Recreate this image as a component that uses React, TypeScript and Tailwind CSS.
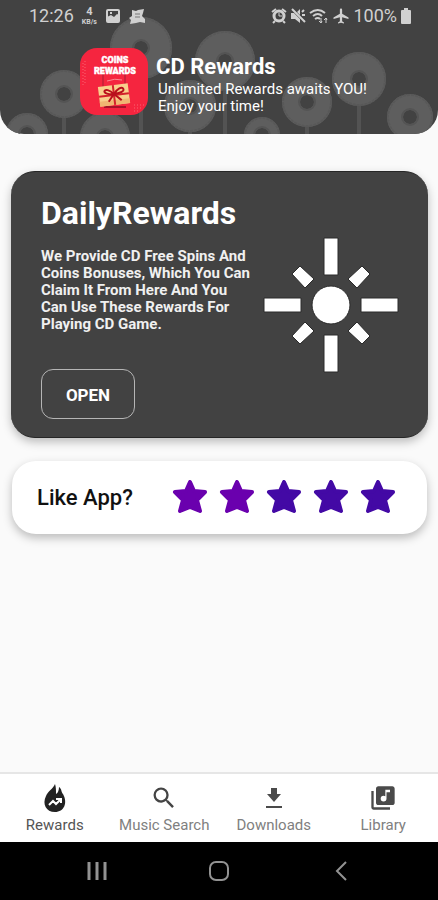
import React from 'react';
import { MdAirplanemodeActive, MdLibraryMusic, MdSearch } from 'react-icons/md';

const FLOWERS = [
  { x: 141, y: 48, r: 31 },
  { x: 225, y: 61, r: 30 },
  { x: 64, y: 94, r: 24 },
  { x: 27, y: 134, r: 21 },
  { x: 105, y: 137, r: 25 },
  { x: 190, y: 106, r: 26 },
  { x: 262, y: 135, r: 18 },
  { x: 307, y: 102, r: 25 },
  { x: 359, y: 79, r: 27 },
  { x: 410, y: 117, r: 23 },
];

const STARS = ['#6a00ae', '#6a00ae', '#4309a5', '#4309a5', '#4309a5'];

const FlowerPattern: React.FC = () => (
  <svg
    className="absolute inset-0 w-full h-full"
    viewBox="0 0 438 134"
    preserveAspectRatio="xMidYMin slice"
    fill="none"
    aria-hidden="true"
  >
    {FLOWERS.map(({ x, y, r }) => (
      <g key={`${x}-${y}`} stroke="#5e5e5e">
        <path d={`M${x} ${y + r}V134`} strokeWidth={4} stroke="#535353" />
        <circle cx={x} cy={y} r={(r + 7) / 2} strokeWidth={r - 7} />
        <circle cx={x} cy={y} r={r - 1} strokeWidth={2} strokeDasharray="3 1" stroke="#585858" />
        <circle cx={x} cy={y} r={8} strokeWidth={2} stroke="#545454" />
      </g>
    ))}
  </svg>
);

const AppLogo: React.FC = () => (
  <svg className="w-[68px] h-[67px] shrink-0" viewBox="0 0 68 67" role="img" aria-label="Coins Rewards">
    <rect width="68" height="67" rx="17" fill="#f5253f" />
    <g stroke="#fa6573" strokeWidth="1" strokeDasharray="1 2">
      <path d="M3 15v24M5 13v22" />
      <path d="M54 57h11M54 60h9M54 63h6" />
    </g>
    <path d="M23 26v14M45 26v14" stroke="#a51f33" strokeWidth="1" />
    <path d="M27 33q8-3 15-1" stroke="#fa8a92" strokeWidth="1" fill="none" />
    <path d="M24 59h22" stroke="#a31529" strokeWidth="2" />
    <g transform="rotate(-7 34 47)">
      <rect x="19" y="37" width="30" height="20" fill="#f9cf8c" />
      <path d="M19 52h30v5H19z" fill="#f0b672" />
      <path d="M34 37v20M19 47h30" stroke="#d3222b" strokeWidth="2" />
      <path
        d="M34 46c-4-5-8-6-9-4s4 4 9 4c4-5 9-7 10-4s-5 4-10 4l-6 7M34 46l7 7"
        stroke="#b8101c"
        strokeWidth="2"
        fill="none"
      />
    </g>
    <g fontFamily="Roboto, sans-serif" fontWeight="900" fill="#fff" stroke="#fff" strokeWidth="0.4" textAnchor="middle">
      <text x="35" y="15" fontSize="9">COINS</text>
      <text x="35" y="26" fontSize="9">REWARDS</text>
    </g>
  </svg>
);

const StatusBar: React.FC = () => (
  <div className="flex items-center justify-between h-8 pl-[29px] pr-[26px] text-[#d0d0d0]">
    <div className="flex items-center gap-2">
      <span className="text-lg leading-5">12:26</span>
      <span className="flex flex-col items-center font-bold">
        <span className="text-[11px] leading-[13px]">4</span>
        <span className="text-[7px] leading-[9px]">KB/s</span>
      </span>
      <svg className="w-4 h-4" viewBox="0 0 16 16" fill="none" stroke="currentColor" strokeWidth="2">
        <rect x="2" y="2" width="12" height="12" rx="1" />
        <path d="M2 9l4-2 3 2 3-3 2 1v7H2z" fill="currentColor" stroke="none" />
        <path d="M5 5h2" />
      </svg>
      <svg className="w-4 h-4" viewBox="0 0 16 16" fill="currentColor">
        <path d="M3 2l4 1 2-1 6-1-1 4-1 3 3 3v4l-5-1-4 1-6 1 1-4-2-2 3-2z" />
        <path d="M6 6h5M6 9h5" stroke="#777" strokeWidth="1" fill="none" />
      </svg>
    </div>
    <div className="flex items-center gap-[3px]">
      <svg className="w-4 h-4" viewBox="0 0 16 16" fill="none" stroke="currentColor">
        <circle cx="8" cy="8" r="5" strokeWidth="3" />
        <path d="M1 4l4-3M15 4l-4-3M4 13l-2 2M12 13l2 2" strokeWidth="2" />
        <path d="M8 5v3h3" strokeWidth="1" />
      </svg>
      <svg className="w-4 h-4" viewBox="0 0 16 16" fill="currentColor">
        <path d="M1 5h3l6 6v4l-5-4H1zM10 1v6L7 4z" />
        <path d="M2 1l13 13M12 4l2-2M12 7h3" stroke="currentColor" strokeWidth="2" />
      </svg>
      <svg className="w-5 h-4" viewBox="0 0 20 16" fill="none" stroke="currentColor">
        <path d="M1 5q8-6 15 0M4 8q5-4 9 0M6 11q3-2 5 0" strokeWidth="2" />
        <path d="M12 10v5M10 13l2 2 1-2M17 15v-5M15 12l2-2 1 2" strokeWidth="1" />
      </svg>
      <MdAirplanemodeActive className="w-[18px] h-[18px]" />
      <span className="text-lg leading-5">100%</span>
      <svg className="w-3 h-4" viewBox="0 0 12 16" fill="currentColor">
        <path d="M4 0h4v2h2q1 0 1 1v12q0 1-1 1H2q-1 0-1-1V3q0-1 1-1h2z" />
      </svg>
    </div>
  </div>
);

const Header: React.FC = () => (
  <header className="relative overflow-hidden rounded-b-3xl bg-[#424242]">
    <FlowerPattern />
    <div className="relative">
      <StatusBar />
      <div className="flex gap-2 px-20 pt-4 pb-[19px] text-white">
        <AppLogo />
        <div className="pt-[5px] whitespace-nowrap">
          <h1 className="text-[22px] leading-7 font-bold">CD Rewards</h1>
          <p className="pl-[2px] text-[15px] leading-[17px]">
            Unlimited Rewards awaits YOU!
            <br />
            Enjoy your time!
          </p>
        </div>
      </div>
    </div>
  </header>
);

const SunIcon: React.FC = () => (
  <svg className="w-[136px] h-[136px] shrink-0" viewBox="0 0 136 136" fill="#fff" stroke="#2a2a2a" aria-hidden="true">
    <circle cx="68" cy="68" r="19" />
    <path d="M61 1h14v37H61zM61 98h14v37H61zM1 61h37v14H1zM98 61h37v14H98z" />
    <path d="M37 29l14 13-9 9-13-14zM99 29l8 8-13 14-9-9zM29 99l13-14 9 9-14 13zM94 85l13 14-8 8-14-13z" />
  </svg>
);

const DailyCard: React.FC = () => (
  <section className="flex flex-col pt-[23px] pb-[18px] px-[30px] rounded-3xl bg-[#424242] text-white border-y border-[#262626] shadow-[0_4px_10px_rgba(0,0,0,0.25)]">
    <h2 className="text-[32px] leading-9 font-bold">DailyRewards</h2>
    <div className="flex justify-between -mr-px">
      <p className="pt-[17px] w-[214px] text-[15px] leading-[17px] font-bold text-[#f0f0f0]">
        We Provide CD Free Spins And Coins Bonuses, Which You Can Claim It From Here And You Can Use These Rewards For
        Playing CD Game.
      </p>
      <div className="pt-[6px]">
        <SunIcon />
      </div>
    </div>
    <button
      type="button"
      className="self-start -mt-1 pt-1 w-[94px] h-[50px] rounded-xl border border-[#b5b5b5] text-[17px] font-bold"
    >
      OPEN
    </button>
  </section>
);

const RateCard: React.FC = () => (
  <section className="flex items-center justify-between mx-px h-[73px] pl-[25px] pr-[31px] rounded-3xl bg-white shadow-[0_4px_10px_rgba(0,0,0,0.25)]">
    <h2 className="text-[22px] font-medium text-[#111]">Like App?</h2>
    <div className="flex gap-[11px]">
      {STARS.map((color, i) => (
        <button key={i} type="button" aria-label={`${i + 1} stars`}>
          <svg className="w-9 h-9" viewBox="0 0 36 36" fill={color} stroke={color} strokeWidth="4" strokeLinejoin="round">
            <path d="M18 2l4 9 11 1-8 8 3 11-10-4-10 4 3-11-8-8 11-1z" />
          </svg>
        </button>
      ))}
    </div>
  </section>
);

const FireIcon: React.FC = () => (
  <svg className="w-7 h-7" viewBox="0 0 28 28" fill="#222">
    <path d="M14 0c1 3 1 6 1 10 2-1 3-4 3-7 3 2 2 5 4 7 5 9 1 18-8 18S1 20 5 12c2-5 7-7 9-12z" />
    <path d="M8 21l4-4 3 3 5-5M15 15h5v4" fill="none" stroke="#fff" strokeWidth="2" />
  </svg>
);

const DownloadIcon: React.FC = () => (
  <svg className="w-7 h-7" viewBox="0 0 28 28" fill="#4a4a4a">
    <path d="M11 4h6v6h4l-7 8-7-8h4zM6 22h16v2H6z" />
  </svg>
);

const NAV = [
  { label: 'Rewards', icon: <FireIcon />, color: 'text-[#555]' },
  { label: 'Music Search', icon: <MdSearch className="w-7 h-7 text-[#444]" />, color: 'text-[#808080]' },
  { label: 'Downloads', icon: <DownloadIcon />, color: 'text-[#808080]' },
  { label: 'Library', icon: <MdLibraryMusic className="w-7 h-7 text-[#4a4a4a]" />, color: 'text-[#808080]' },
];

const TabBar: React.FC = () => (
  <nav className="grid grid-cols-4 h-[70px] border-t-2 border-[#e6e6e6] bg-white">
    {NAV.map(({ label, icon, color }) => (
      <a key={label} href="#" className={`flex flex-col items-center pt-[10px] text-[15px] leading-5 whitespace-nowrap ${color}`}>
        <span className="h-[31px]">{icon}</span>
        {label}
      </a>
    ))}
  </nav>
);

const SystemBar: React.FC = () => (
  <div className="grid grid-cols-[1fr_50px_1fr] h-[58px] items-center bg-black text-[#929292]">
    <button type="button" aria-label="Recent apps" className="justify-self-center">
      <svg className="w-5 h-5" viewBox="0 0 20 20" stroke="currentColor" strokeWidth="3">
        <path d="M2 1v18M10 1v18M18 1v18" />
      </svg>
    </button>
    <button type="button" aria-label="Home" className="justify-self-center">
      <svg className="w-5 h-5" viewBox="0 0 20 20" fill="none" stroke="currentColor" strokeWidth="2">
        <rect x="1" y="1" width="18" height="18" rx="6" />
      </svg>
    </button>
    <button type="button" aria-label="Back" className="justify-self-center">
      <svg className="w-5 h-5" viewBox="0 0 20 20" fill="none" stroke="currentColor" strokeWidth="2">
        <path d="M15 1L6 10l9 9" />
      </svg>
    </button>
  </div>
);

const App: React.FC = () => {
  return (
    <div className="flex flex-col min-h-screen bg-[#fafafa] font-[Roboto,sans-serif]">
      <Header />
      <main className="flex flex-col flex-1 gap-[23px] pt-[37px] pb-6 pl-[11px] pr-[10px]">
        <DailyCard />
        <RateCard />
      </main>
      <TabBar />
      <SystemBar />
    </div>
  );
};

export default App;
